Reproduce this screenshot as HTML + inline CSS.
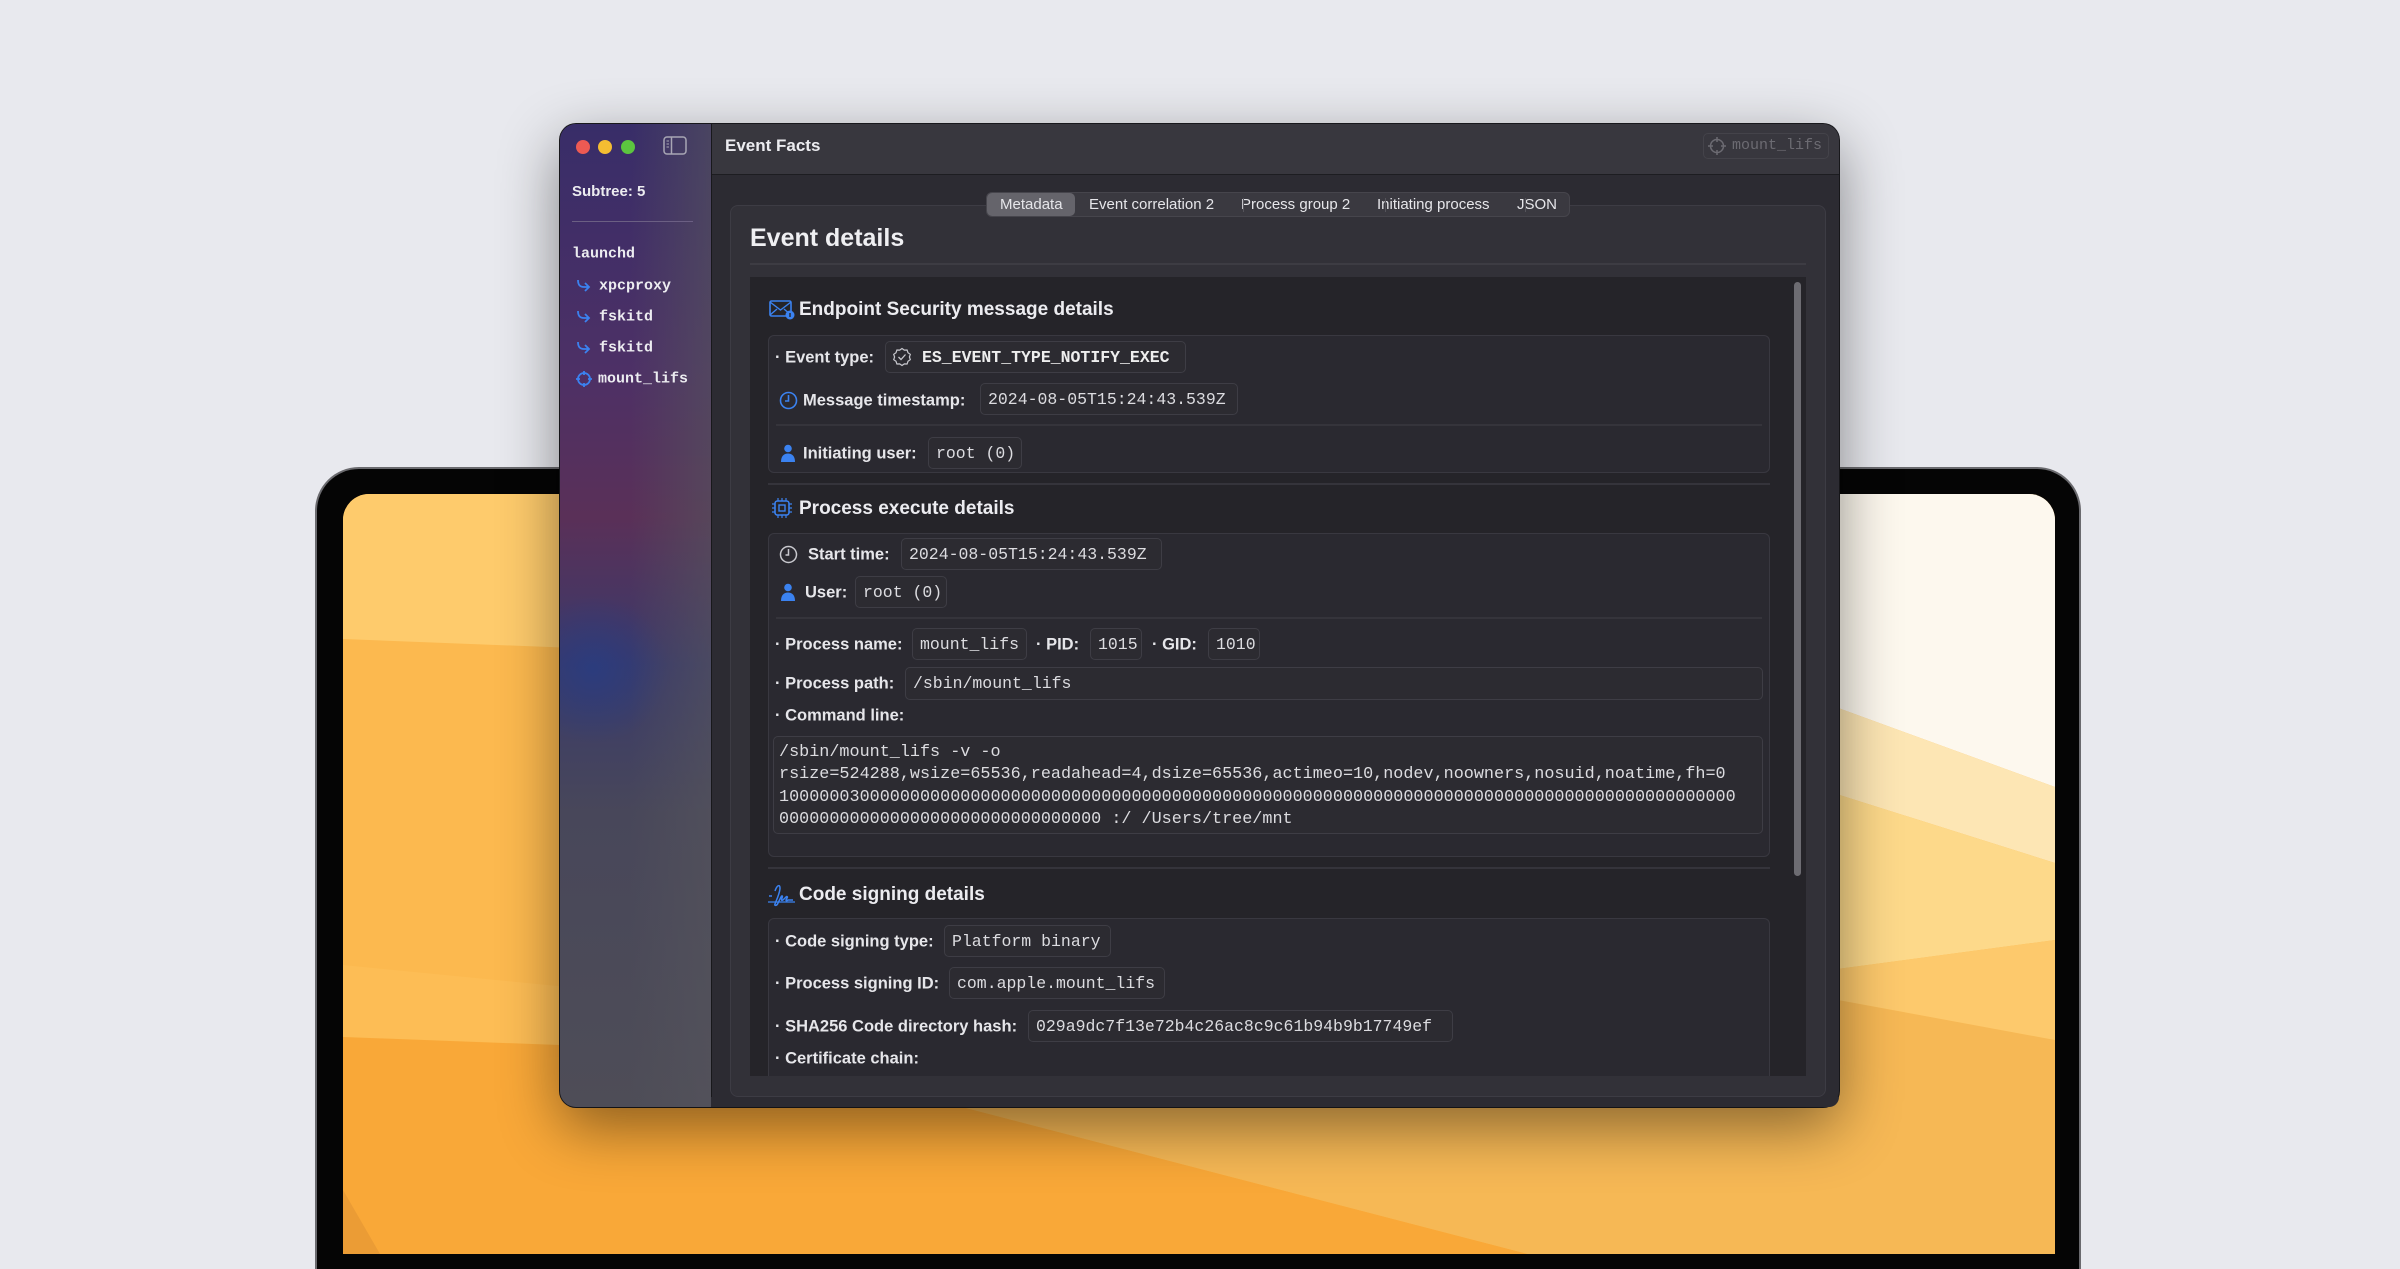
<!DOCTYPE html>
<html><head><meta charset="utf-8"><style>
*{margin:0;padding:0;box-sizing:border-box}
body{width:2400px;height:1240px;background:#e8e9ee;position:relative;overflow:hidden;font-family:"Liberation Sans",sans-serif}
.abs{position:absolute}
.mono{font-family:"Liberation Mono",monospace}
.lbl{position:absolute;color:#e6e6ea;font-weight:bold;font-size:16.5px;white-space:nowrap;transform:translateY(-50%)}
.pill{position:absolute;background:#2c2b31;border:1px solid #3e3d45;border-radius:5px;color:#dcdce0;font-family:"Liberation Mono",monospace;font-size:16.5px;white-space:nowrap;display:flex;align-items:center;padding-left:7px}
.box{position:absolute;left:768px;width:1002px;background:#2a2930;border:1px solid #393840;border-radius:6px}
.sep{position:absolute;height:2px;background:#35343b}
.sec{position:absolute;color:#ececf0;font-weight:bold;font-size:19px;transform:translateY(-50%);white-space:nowrap}
.side{position:absolute;color:#ececf0;font-size:15px;font-family:"Liberation Mono",monospace;font-weight:bold;transform:translateY(-50%)}
</style></head><body>
<!-- laptop -->
<div class="abs" style="left:317px;top:469px;width:1762px;height:800px;background:#050505;border-radius:42px 42px 0 0;box-shadow:0 0 0 2px #6a6a6e"></div>
<div class="abs" style="left:343px;top:494px;width:1712px;height:760px;border-radius:26px 26px 0 0;overflow:hidden">
<svg width="1712" height="760" viewBox="343 494 1712 760" style="display:block">
<rect x="343" y="494" width="1712" height="760" fill="#fcb94f"/>
<polygon points="343,494 1400,494 1400,680 343,639" fill="#fecb6c"/>
<polygon points="343,965 700,1000 700,1050 343,1037" fill="#fdbd55"/>
<polygon points="343,1037 960,1060 966,1108 1528,1254 343,1254" fill="#f9a838"/>
<polygon points="966,1108 1838,1000 2055,1040 2055,1254 1528,1254" fill="#f6b855"/>
<polygon points="1300,494 2055,494 2055,787 1830,705 1300,600" fill="#fdf8ee"/>
<polygon points="1830,705 2055,787 2055,863 1830,792" fill="#fde6b4"/>
<polygon points="1830,792 2055,863 2055,940 1830,970" fill="#fdd98a"/>
<polygon points="1830,970 2055,940 2055,1040 1838,1000" fill="#fdc96c"/>
<polygon points="343,1190 380,1254 343,1254" fill="#eb9c35"/>
</svg></div>
<!-- window -->
<div class="abs" style="left:560px;top:124px;width:1279px;height:983px;border-radius:16px;overflow:hidden;background:#2c2b32;box-shadow:0 20px 60px rgba(0,0,0,.45),0 0 0 1px #1c1c20">
 <div class="abs" style="left:0;top:0;width:151px;height:983px;background:linear-gradient(180deg,#382d68 0%,#4d3066 25%,#5a3058 40%,#3a3a6a 55%,#48475a 70%,#4e4d57 100%)"></div>
 <div class="abs" style="left:0;top:470px;width:110px;height:150px;background:radial-gradient(ellipse at 30% 50%,rgba(40,60,130,.8),rgba(40,60,130,0) 70%)"></div>
 <div class="abs" style="left:70px;top:0;width:81px;height:983px;background:linear-gradient(90deg,rgba(80,78,88,0),rgba(85,84,92,.6))"></div>
 <div class="abs" style="left:151px;top:0;width:1px;height:983px;background:#18181b"></div>
 <div class="abs" style="left:152px;top:0;width:1127px;height:51px;background:#38373e;border-bottom:1px solid #1d1d21"></div>
</div>
<!-- traffic lights -->
<div class="abs" style="left:576px;top:140px;width:14px;height:14px;border-radius:50%;background:#ed5a53"></div>
<div class="abs" style="left:598px;top:140px;width:14px;height:14px;border-radius:50%;background:#f4bd32"></div>
<div class="abs" style="left:621px;top:140px;width:14px;height:14px;border-radius:50%;background:#5cc53f"></div>
<svg class="abs" style="left:663px;top:136px" width="24" height="19" viewBox="0 0 24 19"><rect x="1" y="1" width="22" height="17" rx="3" fill="none" stroke="#a8a6b4" stroke-width="1.5"/><line x1="8.5" y1="1" x2="8.5" y2="18" stroke="#a8a6b4" stroke-width="1.5"/><line x1="3.5" y1="5" x2="6" y2="5" stroke="#a8a6b4"/><line x1="3.5" y1="8" x2="6" y2="8" stroke="#a8a6b4"/><line x1="3.5" y1="11" x2="6" y2="11" stroke="#a8a6b4"/></svg>
<div class="abs" style="left:725px;top:136px;color:#ececf0;font-weight:bold;font-size:17px">Event Facts</div>
<div class="abs" style="left:1703px;top:133px;width:126px;height:26px;border:1px solid #44434a;border-radius:5px"></div>
<svg class="abs" style="left:1707px;top:136px" width="20" height="20" viewBox="0 0 20 20"><circle cx="10" cy="10" r="6.5" fill="none" stroke="#6c6b72" stroke-width="1.5"/><path d="M10 1v5M10 14v5M1 10h5M14 10h5" stroke="#6c6b72" stroke-width="1.5"/></svg>
<div class="abs mono" style="left:1732px;top:137px;color:#6c6b72;font-size:15px">mount_lifs</div>
<!-- sidebar -->
<div class="abs" style="left:572px;top:183px;color:#ececf0;font-weight:bold;font-size:15px">Subtree: 5</div>
<div class="abs" style="left:572px;top:221px;width:121px;height:1px;background:#6b5f83"></div>
<div class="side" style="left:572px;top:254px">launchd</div>
<svg class="abs" style="left:575px;top:278px" width="16" height="14" viewBox="0 0 16 14"><path d="M3 2c0 5 2 7 6 7h5M10 5l4 4-4 4" fill="none" stroke="#3b82f0" stroke-width="1.8"/></svg>
<div class="side" style="left:599px;top:286px">xpcproxy</div>
<svg class="abs" style="left:575px;top:309px" width="16" height="14" viewBox="0 0 16 14"><path d="M3 2c0 5 2 7 6 7h5M10 5l4 4-4 4" fill="none" stroke="#3b82f0" stroke-width="1.8"/></svg>
<div class="side" style="left:599px;top:317px">fskitd</div>
<svg class="abs" style="left:575px;top:340px" width="16" height="14" viewBox="0 0 16 14"><path d="M3 2c0 5 2 7 6 7h5M10 5l4 4-4 4" fill="none" stroke="#3b82f0" stroke-width="1.8"/></svg>
<div class="side" style="left:599px;top:348px">fskitd</div>
<svg class="abs" style="left:575px;top:370px" width="18" height="18" viewBox="0 0 18 18"><circle cx="9" cy="9" r="6" fill="none" stroke="#3b82f0" stroke-width="1.8"/><path d="M9 1v4M9 13v4M1 9h4M13 9h4" stroke="#3b82f0" stroke-width="1.8"/></svg>
<div class="side" style="left:598px;top:379px">mount_lifs</div>
<!-- content panel -->
<div class="abs" style="left:730px;top:205px;width:1096px;height:892px;background:#323138;border:1px solid #3d3c44;border-radius:8px"></div>
<div class="abs" style="left:986px;top:192px;width:584px;height:25px;background:#3a3940;border:1px solid #46454c;border-radius:6px"></div>
<div class="abs" style="left:987px;top:193px;width:88px;height:23px;background:#65646b;border-radius:5px"></div>
<div class="abs" style="left:987px;top:196px;width:583px;color:#e6e6ea;font-size:15px;white-space:nowrap">
<span class="abs" style="left:13px">Metadata</span>
<span class="abs" style="left:102px">Event correlation 2</span>
<span class="abs" style="left:254px">Process group 2</span>
<span class="abs" style="left:390px">Initiating process</span>
<span class="abs" style="left:530px">JSON</span>
</div>
<div class="abs" style="left:1243px;top:198px;width:1px;height:14px;background:#55545b"></div>
<div class="abs" style="left:1385px;top:198px;width:1px;height:14px;background:#55545b"></div>
<div class="abs" style="left:1525px;top:198px;width:1px;height:14px;background:#55545b"></div>
<div class="abs" style="left:750px;top:224px;color:#efeff2;font-weight:bold;font-size:25px">Event details</div>
<div class="abs" style="left:750px;top:263px;width:1056px;height:2px;background:#3d3c43"></div>
<div class="abs" style="left:750px;top:277px;width:1056px;height:799px;background:#252429"></div>
<div class="abs" style="left:1794px;top:282px;width:7px;height:594px;background:#6d6c72;border-radius:4px"></div>
<!-- section 1 -->
<svg class="abs" style="left:769px;top:299px" width="26" height="21" viewBox="0 0 26 21"><rect x="1" y="2" width="21" height="15" rx="1.5" fill="none" stroke="#3b82f0" stroke-width="1.6"/><path d="M1 3l10.5 8L22 3M1 16l7-6M22 16l-7-6" fill="none" stroke="#3b82f0" stroke-width="1.4"/><circle cx="21" cy="16" r="4.5" fill="#3b82f0"/><rect x="20.3" y="14" width="1.4" height="4" fill="#252429"/></svg>
<div class="sec" style="left:799px;top:310px">Endpoint Security message details</div>
<div class="box" style="top:335px;height:138px"></div>
<div class="lbl" style="left:775px;top:358px">· Event type:</div>
<div class="pill" style="left:885px;top:341px;width:301px;height:32px;font-weight:bold;color:#eee;padding-left:36px">ES_EVENT_TYPE_NOTIFY_EXEC</div>
<svg class="abs" style="left:892px;top:347px" width="20" height="20" viewBox="0 0 20 20"><path d="M10 1.5l2.3 1.6 2.8-.1.9 2.7 2.3 1.6-.9 2.7.9 2.7-2.3 1.6-.9 2.7-2.8-.1L10 18.5l-2.3-1.6-2.8.1-.9-2.7-2.3-1.6.9-2.7-.9-2.7 2.3-1.6.9-2.7 2.8.1z" fill="none" stroke="#c8c8ce" stroke-width="1.2"/><path d="M6.5 10l2.5 2.5 4.5-5" fill="none" stroke="#c8c8ce" stroke-width="1.3"/></svg>
<svg class="abs" style="left:779px;top:391px" width="19" height="19" viewBox="0 0 19 19"><circle cx="9.5" cy="9.5" r="8" fill="none" stroke="#3b82f0" stroke-width="1.6"/><path d="M9.5 4v6H6" fill="none" stroke="#3b82f0" stroke-width="1.6"/></svg>
<div class="lbl" style="left:803px;top:401px">Message timestamp:</div>
<div class="pill" style="left:980px;top:383px;width:258px;height:32px">2024-08-05T15:24:43.539Z</div>
<div class="sep" style="left:776px;top:424px;width:986px"></div>
<svg class="abs" style="left:780px;top:444px" width="16" height="18" viewBox="0 0 16 18"><circle cx="8" cy="4.5" r="3.8" fill="#3b82f0"/><path d="M1 18c0-6 3-8.5 7-8.5s7 2.5 7 8.5z" fill="#3b82f0"/></svg>
<div class="lbl" style="left:803px;top:454px">Initiating user:</div>
<div class="pill" style="left:928px;top:437px;width:94px;height:32px">root (0)</div>
<div class="sep" style="left:768px;top:483px;width:1002px"></div>
<!-- section 2 -->
<svg class="abs" style="left:772px;top:498px" width="20" height="20" viewBox="0 0 20 20"><rect x="3" y="3" width="14" height="14" rx="2.5" fill="none" stroke="#3b82f0" stroke-width="1.6"/><rect x="7" y="7" width="6" height="6" fill="none" stroke="#3b82f0" stroke-width="1.4"/><path d="M6 0v3M10 0v3M14 0v3M6 17v3M10 17v3M14 17v3M0 6h3M0 10h3M0 14h3M17 6h3M17 10h3M17 14h3" stroke="#3b82f0" stroke-width="1.2"/></svg>
<div class="sec" style="left:799px;top:509px">Process execute details</div>
<div class="box" style="top:533px;height:324px"></div>
<svg class="abs" style="left:779px;top:545px" width="19" height="19" viewBox="0 0 19 19"><circle cx="9.5" cy="9.5" r="8" fill="none" stroke="#c8c8ce" stroke-width="1.5"/><path d="M9.5 4v6H6.5" fill="none" stroke="#c8c8ce" stroke-width="1.5"/></svg>
<div class="lbl" style="left:808px;top:555px">Start time:</div>
<div class="pill" style="left:901px;top:538px;width:261px;height:32px">2024-08-05T15:24:43.539Z</div>
<svg class="abs" style="left:780px;top:583px" width="16" height="18" viewBox="0 0 16 18"><circle cx="8" cy="4.5" r="3.8" fill="#3b82f0"/><path d="M1 18c0-6 3-8.5 7-8.5s7 2.5 7 8.5z" fill="#3b82f0"/></svg>
<div class="lbl" style="left:805px;top:593px">User:</div>
<div class="pill" style="left:855px;top:576px;width:92px;height:32px">root (0)</div>
<div class="sep" style="left:776px;top:617px;width:986px"></div>
<div class="lbl" style="left:775px;top:645px">· Process name:</div>
<div class="pill" style="left:912px;top:628px;width:115px;height:32px">mount_lifs</div>
<div class="lbl" style="left:1036px;top:645px">· PID:</div>
<div class="pill" style="left:1090px;top:628px;width:52px;height:32px">1015</div>
<div class="lbl" style="left:1152px;top:645px">· GID:</div>
<div class="pill" style="left:1208px;top:628px;width:52px;height:32px">1010</div>
<div class="lbl" style="left:775px;top:684px">· Process path:</div>
<div class="pill" style="left:905px;top:667px;width:858px;height:33px">/sbin/mount_lifs</div>
<div class="lbl" style="left:775px;top:716px">· Command line:</div>
<div class="abs mono" style="left:773px;top:736px;width:990px;height:98px;background:#2c2b31;border:1px solid #3e3d45;border-radius:5px;color:#dcdce0;font-size:16.8px;line-height:22.3px;padding:5px 0 0 5px;white-space:pre">/sbin/mount_lifs -v -o
rsize=524288,wsize=65536,readahead=4,dsize=65536,actimeo=10,nodev,noowners,nosuid,noatime,fh=0
10000003000000000000000000000000000000000000000000000000000000000000000000000000000000000000000
00000000000000000000000000000000 :/ /Users/tree/mnt</div>
<div class="sep" style="left:768px;top:867px;width:1002px"></div>
<!-- section 3 -->
<svg class="abs" style="left:767px;top:882px" width="30" height="26" viewBox="0 0 30 26"><path d="M2 14h3M8 9c2-6 5-7 5-3 0 5-4 13-5 16-1 2 2 2 3-1l3-6c1-2 2-1 1 1-1 3 0 3 2 1l2-2c1-1 2 0 1 1l-1 2c0 1 1 1 2 0h5" fill="none" stroke="#3b82f0" stroke-width="1.5"/><path d="M1 20h27" stroke="#3b82f0" stroke-width="1.2"/></svg>
<div class="sec" style="left:799px;top:895px">Code signing details</div>
<div class="box" style="top:918px;height:170px;border-bottom:none;border-radius:6px 6px 0 0"></div>
<div class="lbl" style="left:775px;top:942px">· Code signing type:</div>
<div class="pill" style="left:944px;top:925px;width:167px;height:32px">Platform binary</div>
<div class="lbl" style="left:775px;top:984px">· Process signing ID:</div>
<div class="pill" style="left:949px;top:967px;width:216px;height:32px">com.apple.mount_lifs</div>
<div class="lbl" style="left:775px;top:1027px">· SHA256 Code directory hash:</div>
<div class="pill" style="left:1028px;top:1010px;width:425px;height:32px">029a9dc7f13e72b4c26ac8c9c61b94b9b17749ef</div>
<div class="lbl" style="left:775px;top:1059px">· Certificate chain:</div>
<!-- cover bottom of scroll area -->
<div class="abs" style="left:731px;top:1076px;width:1094px;height:20px;background:#323138;border-radius:0 0 8px 8px"></div>
<div class="abs" style="left:711px;top:1097px;width:1128px;height:10px;background:#2c2b32;border-radius:0 0 16px 0"></div>
</body></html>
